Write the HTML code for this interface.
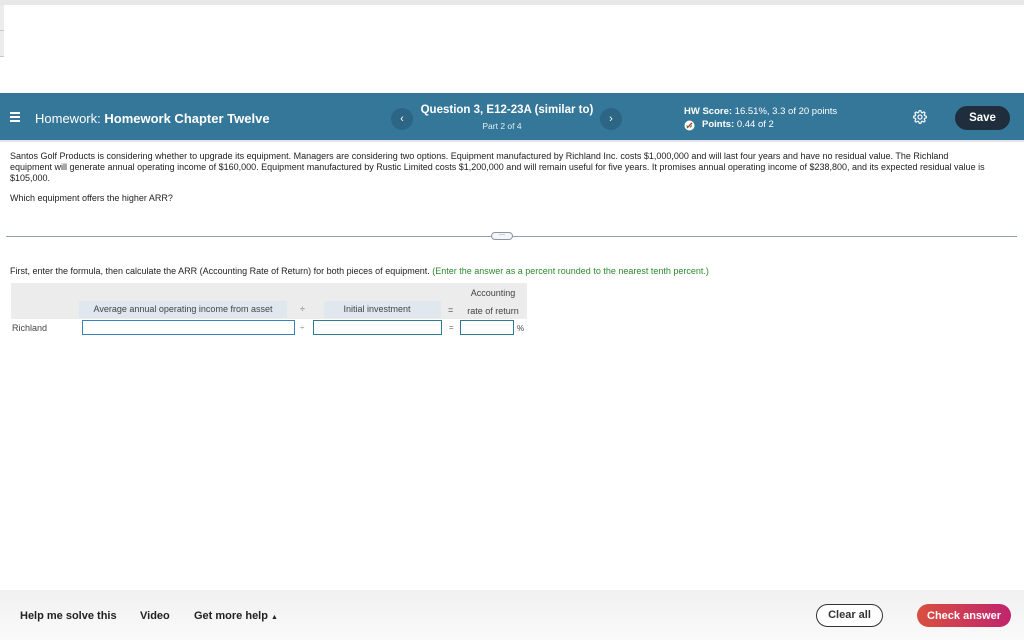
<!DOCTYPE html>
<html><head><meta charset="utf-8"><style>
*{margin:0;padding:0;box-sizing:border-box}
body{width:1024px;height:640px;position:relative;background:#fff;font-family:"Liberation Sans",Arial,sans-serif;color:#222;overflow:hidden}
.a{position:absolute}
.hdr{left:0;top:93px;width:1024px;height:47px;background:#357799;color:#fff}
.btn{border-radius:50%;background:#2d6584;width:22px;height:22px;color:#fff;font-size:11px;text-align:center;line-height:22px}
.in{position:absolute;height:15px;border:1px solid #3a7fb6;background:#fff}
.s{font-size:9px;line-height:11px}
</style></head><body>
<div class="a" style="left:0;top:0;width:1024px;height:5px;background:#e8e8e8"></div>
<div class="a" style="left:0;top:5px;width:4px;height:52px;background:#ececec;border-bottom:1px solid #c8c8c8"></div>
<div class="a" style="left:0;top:30px;width:4px;height:1px;background:#c8c8c8"></div>
<div class="a hdr">
 <div class="a" style="left:10px;top:19px;width:10px;height:1.5px;background:#fff;box-shadow:0 4px 0 #fff,0 8px 0 #fff"></div>
 <div class="a" style="left:35px;top:18px;font-size:13px">Homework: <b>Homework Chapter Twelve</b></div>
 <div class="a btn" style="left:391px;top:15px">‹</div>
 <div class="a" style="left:412px;top:11px;width:190px;text-align:center;font-size:11.5px;font-weight:bold">Question 3, E12-23A (similar to)</div>
 <div class="a" style="left:412px;top:28px;width:180px;text-align:center;font-size:8.5px;color:#e4eef4">Part 2 of 4</div>
 <div class="a btn" style="left:600px;top:15px">›</div>
 <div class="a" style="left:684px;top:13px;font-size:9.5px"><b>HW Score:</b> 16.51%, 3.3 of 20 points</div>
 <svg class="a" style="left:684px;top:27px" width="11" height="11" viewBox="0 0 11 11"><circle cx="5.5" cy="5.5" r="5" fill="#fff"/><path d="M3 8L8 3" stroke="#c33" stroke-width="1.3"/><path d="M2.5 5.5l1.5 1.5M6 7.5l2-2" stroke="#393" stroke-width="1.2" fill="none"/></svg>
 <div class="a" style="left:702px;top:26px;font-size:9.5px"><b>Points:</b> 0.44 of 2</div>
 <svg class="a" style="left:913px;top:17px" width="14" height="14" viewBox="0 0 24 24" fill="none" stroke="#fff" stroke-width="2"><circle cx="12" cy="12" r="3.5"/><path d="M19.4 15a1.7 1.7 0 0 0 .3 1.8l.1.1a2 2 0 1 1-2.8 2.8l-.1-.1a1.7 1.7 0 0 0-1.8-.3 1.7 1.7 0 0 0-1 1.5V21a2 2 0 1 1-4 0v-.1a1.7 1.7 0 0 0-1.1-1.5 1.7 1.7 0 0 0-1.8.3l-.1.1a2 2 0 1 1-2.8-2.8l.1-.1a1.7 1.7 0 0 0 .3-1.8 1.7 1.7 0 0 0-1.5-1H3a2 2 0 1 1 0-4h.1a1.7 1.7 0 0 0 1.5-1.100 1.7 1.7 0 0 0-.3-1.8l-.1-.1a2 2 0 1 1 2.8-2.8l.1.1a1.7 1.7 0 0 0 1.8.3H9a1.7 1.7 0 0 0 1-1.5V3a2 2 0 1 1 4 0v.1a1.7 1.7 0 0 0 1 1.5 1.7 1.7 0 0 0 1.8-.3l.1-.1a2 2 0 1 1 2.8 2.8l-.1.1a1.7 1.7 0 0 0-.3 1.8V9a1.7 1.7 0 0 0 1.5 1H21a2 2 0 1 1 0 4h-.1a1.7 1.7 0 0 0-1.5 1z"/></svg>
 <div class="a" style="left:955px;top:13px;width:55px;height:24px;border-radius:12px;background:#1f2d3d;font-size:11.5px;font-weight:bold;text-align:center;line-height:24px">Save</div>
</div>
<div class="a" style="left:0;top:140px;width:1024px;height:2px;background:#dfe3ea"></div>
<div class="a s" style="left:10px;top:151px;width:1010px;white-space:nowrap">Santos Golf Products is considering whether to upgrade its equipment. Managers are considering two options. Equipment manufactured by Richland Inc. costs $1,000,000 and will last four years and have no residual value. The Richland<br>equipment will generate annual operating income of $160,000. Equipment manufactured by Rustic Limited costs $1,200,000 and will remain useful for five years. It promises annual operating income of $238,800, and its expected residual value is<br>$105,000.</div>
<div class="a s" style="left:10px;top:193px">Which equipment offers the higher ARR?</div>
<div class="a" style="left:6px;top:236px;width:1011px;height:1px;background:#8fa0b0"></div>
<div class="a" style="left:491px;top:232px;width:22px;height:8px;border:1px solid #8a96a2;border-radius:4px;background:#f4f6f8;font-size:6px;line-height:5px;text-align:center">···</div>
<div class="a s" style="left:10px;top:266px">First, enter the formula, then calculate the ARR (Accounting Rate of Return) for both pieces of equipment. <span style="color:#2e8a2e">(Enter the answer as a percent rounded to the nearest tenth percent.)</span></div>
<div class="a" style="left:11px;top:283px;width:516px;height:36px;background:#ececec"></div>
<div class="a" style="left:79px;top:301px;width:208px;height:17px;background:#e1e7ef"></div>
<div class="a" style="left:324px;top:301px;width:117px;height:17px;background:#e1e7ef"></div>
<div class="a s" style="left:79px;top:304px;width:208px;text-align:center;color:#444">Average annual operating income from asset</div>
<div class="a s" style="left:300px;top:304px;color:#666">÷</div>
<div class="a s" style="left:313px;top:304px;width:128px;text-align:center;color:#444">Initial investment</div>
<div class="a s" style="left:448px;top:305px;color:#444">=</div>
<div class="a s" style="left:460px;top:288px;width:66px;text-align:center;color:#444">Accounting</div>
<div class="a s" style="left:460px;top:306px;width:66px;text-align:center;color:#444">rate of return</div>
<div class="a s" style="left:12px;top:323px;color:#444">Richland</div>
<div class="in" style="left:82px;top:320px;width:213px"></div>
<div class="a" style="left:300px;top:323px;font-size:8px;color:#888">÷</div>
<div class="in" style="left:313px;top:320px;width:129px;border-color:#2e7a8f"></div>
<div class="a" style="left:449px;top:323px;font-size:8px;color:#666">=</div>
<div class="in" style="left:460px;top:320px;width:54px;border-color:#2e7a8f"></div>
<div class="a" style="left:517px;top:324px;font-size:8px;color:#444">%</div>
<div class="a" style="left:0;top:590px;width:1024px;height:50px;background:linear-gradient(#f1f1f1,#fafafa)"></div>
<div class="a" style="left:20px;top:610px;font-size:11px;font-weight:bold">Help me solve this</div>
<div class="a" style="left:140px;top:610px;font-size:11px;font-weight:bold">Video</div>
<div class="a" style="left:194px;top:610px;font-size:11px;font-weight:bold">Get more help <span style="font-size:7px">▲</span></div>
<div class="a" style="left:816px;top:604px;width:67px;height:23px;border:1.5px solid #333;border-radius:12px;background:#fff;font-size:11px;font-weight:bold;color:#333;text-align:center;line-height:21px">Clear all</div>
<div class="a" style="left:917px;top:604px;width:94px;height:23px;border-radius:12px;background:linear-gradient(90deg,#d95040,#c0246e);font-size:11px;font-weight:bold;color:#fff;text-align:center;line-height:24px">Check answer</div>
</body></html>
